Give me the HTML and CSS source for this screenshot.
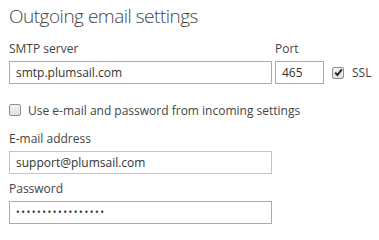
FILE: index.html
```html
<!DOCTYPE html>
<html>
<head>
<meta charset="utf-8">
<link rel="stylesheet" href="styles.css">
</head>
<body>
<div class="panel">
  <h1 class="title">Outgoing email settings</h1>
  <div class="server-row">
    <div class="field smtp">
      <label class="label">SMTP server</label>
      <div class="input">smtp.plumsail.com</div>
    </div>
    <div class="field port">
      <label class="label">Port</label>
      <div class="input">465</div>
    </div>
    <div class="ssl">
      <span class="check checked"><svg width="9" height="9" viewBox="0 0 9 9"><path d="M1.2 4.6 L3.4 7 L7.8 1.4" fill="none" stroke="#222" stroke-width="1.9"/></svg></span>
      <span class="check-text">SSL</span>
    </div>
  </div>
  <div class="use-row">
    <span class="check"></span>
    <span class="check-text">Use e-mail and password from incoming settings</span>
  </div>
  <div class="field wide">
    <label class="label">E-mail address</label>
    <div class="input focused">support@plumsail.com</div>
  </div>
  <div class="field wide pw">
    <label class="label">Password</label>
    <div class="input dots">•••••••••••••••••</div>
  </div>
</div>
</body>
</html>
```
FILE: styles.css
```css
html, body {
  margin: 0;
  padding: 0;
  background: #ffffff;
}
body {
  font-family: "Open Sans", "Noto Sans", sans-serif;
  color: #444444;
  font-size: 12px;
}
.panel {
  padding: 3px 0 0 9px;
  display: flex;
  flex-direction: column;
}
.title {
  margin: 0;
  font-size: 19px;
  font-weight: 300;
  line-height: 26px;
  color: #444444;
  letter-spacing: -0.5px;
}
.server-row {
  display: flex;
  align-items: flex-end;
  margin-top: 12px;
}
.field {
  display: flex;
  flex-direction: column;
}
.label {
  line-height: 16px;
  height: 16px;
  margin-bottom: 4px;
  font-size: 12px;
  color: #444444;
}
.input {
  box-sizing: border-box;
  height: 23px;
  border: 1px solid #ababab;
  padding: 0 6px;
  line-height: 21px;
  font-size: 12px;
  color: #333333;
  background: #ffffff;
  white-space: nowrap;
}
.smtp .input {
  width: 263px;
}
.port {
  margin-left: 3px;
}
.port .input {
  width: 49px;
}
.ssl {
  display: flex;
  align-items: center;
  height: 23px;
  margin-left: 8px;
}
.check {
  box-sizing: border-box;
  width: 12px;
  height: 12px;
  border: 1px solid #8f8f8f;
  border-radius: 2px;
  background: linear-gradient(#f4f4f4, #dedede);
  display: inline-flex;
  align-items: center;
  justify-content: center;
  flex: none;
}
.check-text {
  margin-left: 7px;
  font-size: 12px;
  color: #444444;
}
.ssl .check-text {
  margin-left: 8px;
}
.use-row {
  display: flex;
  align-items: center;
  height: 16px;
  margin-top: 18px;
}
.wide {
  margin-top: 13px;
}
.wide .input {
  width: 263px;
}
.pw {
  margin-top: 7px;
}
.focused {
  border-color: #dcc388;
}
.dots {
  font-size: 10px;
  letter-spacing: 1.5px;
  color: #333333;
}
```
